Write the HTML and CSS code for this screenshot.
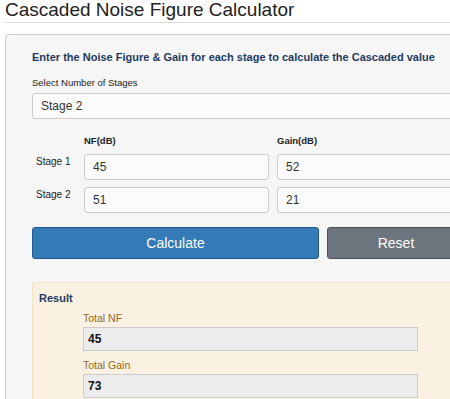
FILE: index.html
```html
<html>
<head>
<title>Cascaded Noise Figure Calculator</title>
<meta name="viewport" content="width=device-width,initial-scale=1">
<link rel="stylesheet" href="styles.css">
</head>
<body>
  <div class="page">
    <h1 class="title">Cascaded Noise Figure Calculator</h1>
    <div class="rule"></div>
    <div class="card">
      <div class="intro">Enter the Noise Figure &amp; Gain for each stage to calculate the Cascaded value</div>
      <div class="field-label">Select Number of Stages</div>
      <div class="select-box">Stage 2</div>
      <div class="stage-grid">
        <span></span>
        <span class="col-head">NF(dB)</span>
        <span class="col-head">Gain(dB)</span>
        <span class="stage-name">Stage 1</span>
        <div class="num-input">45</div>
        <div class="num-input">52</div>
        <span class="stage-name">Stage 2</span>
        <div class="num-input">51</div>
        <div class="num-input">21</div>
      </div>
      <div class="actions">
        <button class="btn btn-primary">Calculate</button>
        <button class="btn btn-reset">Reset</button>
      </div>
      <div class="result">
        <div class="result-title">Result</div>
        <div class="result-label">Total NF</div>
        <div class="result-value">45</div>
        <div class="result-label">Total Gain</div>
        <div class="result-value">73</div>
      </div>
    </div>
  </div>
</body>
</html>
```
FILE: styles.css
```css
html,body { margin: 0; padding: 0; overflow: hidden; font-family: "Liberation Sans", Arial, sans-serif; background: #fff; color: #222; }
.page { width: 487px; padding: 0 5px; }
.title { margin: 0; font-size: 19px; font-weight: normal; line-height: 20px; color: #222; }
.rule { height: 0; border-bottom: 1px solid #ddd; margin-top: 2px; }
.card { margin-top: 11px; border: 1px solid #ccc; border-radius: 4px; background: #f6f6f6; padding: 15px 26px 20px; }
.intro { font-size: 11px; font-weight: bold; line-height: 14px; color: #1d3b5f; white-space: nowrap; }
.field-label { margin-top: 13px; font-size: 9.5px; line-height: 12px; color: #222; }
.select-box { margin-top: 4px; height: 24px; line-height: 24px; border: 1px solid #ccc; border-radius: 3px; background: #fbfbfb; padding: 0 8px; font-size: 12px; color: #333; }
.stage-grid { display: grid; grid-template-columns: 44px 185px 185px; column-gap: 8px; row-gap: 7px; margin-top: 16px; }
.col-head { font-size: 9.5px; font-weight: bold; line-height: 12px; }
.stage-name { font-size: 10px; line-height: 12px; padding: 2px 0 0 4px; }
.num-input { height: 24px; line-height: 24px; border: 1px solid #ccc; border-radius: 3px; background: #fbfbfb; padding: 0 8px; font-size: 12px; color: #333; }
.actions { display: grid; grid-template-columns: 287px 1fr; gap: 8px; margin-top: 14px; }
.btn { height: 32px; border-radius: 3px; font-family: inherit; font-size: 14px; color: #fff; padding: 0; }
.btn-primary { background: #337ab7; border: 1px solid #22588f; }
.btn-reset { background: #6c757d; border: 1px solid #4a5157; }
.result { margin-top: 23px; border: 1px solid #f6e3c0; border-radius: 2px; background: #fbf1e2; padding: 8px 0 10px 6px; }
.result-title { font-size: 11px; font-weight: bold; line-height: 14px; color: #1d3b5f; }
.result-label { margin-top: 7px; margin-left: 44px; font-size: 10.5px; line-height: 13px; color: #94691d; }
.result-value { margin-top: 2px; margin-left: 44px; width: 325px; height: 22px; line-height: 22px; border: 1px solid #ccc; background: #ececec; padding: 0 4px; font-size: 12px; font-weight: bold; color: #111; }
.result-value + .result-label { margin-top: 8px; }
```
